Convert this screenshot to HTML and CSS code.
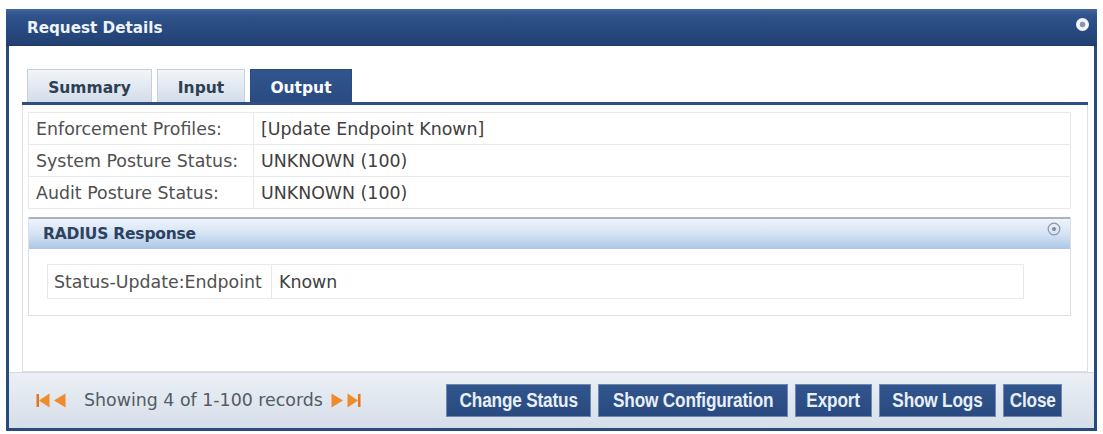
FILE: index.html
```html
<!DOCTYPE html>
<html>
<head>
<meta charset="utf-8">
<link rel="stylesheet" href="styles.css">
</head>
<body>
<div class="dialog">
  <div class="titlebar">
    <span class="title">Request Details</span>
    <span class="close-x"></span>
  </div>
  <div class="body">
    <div class="tabs">
      <div class="tab tab-summary">Summary</div>
      <div class="tab tab-input">Input</div>
      <div class="tab tab-output active">Output</div>
    </div>
    <div class="panel">
      <table class="grid">
        <tr><td class="lbl">Enforcement Profiles:</td><td class="val">[Update Endpoint Known]</td></tr>
        <tr><td class="lbl">System Posture Status:</td><td class="val">UNKNOWN (100)</td></tr>
        <tr><td class="lbl">Audit Posture Status:</td><td class="val">UNKNOWN (100)</td></tr>
      </table>
      <div class="section">
        <div class="section-head">
          <span>RADIUS Response</span>
          <svg class="toggle" width="14" height="14" viewBox="0 0 14 14"><circle cx="7" cy="7" r="5.8" fill="none" stroke="#8a96a6" stroke-width="1.2"/><circle cx="7" cy="7" r="2" fill="#7f8b9b"/></svg>
        </div>
        <div class="section-body">
          <table class="grid inner">
            <tr><td class="lbl2">Status-Update:Endpoint</td><td class="val">Known</td></tr>
          </table>
        </div>
      </div>
    </div>
  </div>
  <div class="footer">
    <div class="pager">
      <svg width="14" height="15" viewBox="0 0 14 15"><rect x="0.5" y="1" width="2.5" height="13" fill="#e8741c"/><polygon points="13.5,0.5 13.5,14.5 3,7.5" fill="#f08a2a"/></svg>
      <svg width="13" height="15" viewBox="0 0 13 15"><polygon points="12.5,0.5 12.5,14.5 1,7.5" fill="#f08a2a"/></svg>
      <span class="pager-text">Showing 4 of 1-100 records</span>
      <svg width="13" height="15" viewBox="0 0 13 15"><polygon points="0.5,0.5 0.5,14.5 12,7.5" fill="#f08a2a"/></svg>
      <svg width="14" height="15" viewBox="0 0 14 15"><polygon points="0.5,0.5 0.5,14.5 11,7.5" fill="#f08a2a"/><rect x="11" y="1" width="2.5" height="13" fill="#e8741c"/></svg>
    </div>
    <div class="buttons">
      <button class="btn btn-change"><span class="btn-label">Change Status</span></button>
      <button class="btn btn-config"><span class="btn-label">Show Configuration</span></button>
      <button class="btn btn-export"><span class="btn-label">Export</span></button>
      <button class="btn btn-logs"><span class="btn-label">Show Logs</span></button>
      <button class="btn btn-close"><span class="btn-label">Close</span></button>
    </div>
  </div>
</div>
</body>
</html>
```
FILE: styles.css
```css
html, body {
  margin: 0;
  padding: 0;
  background: #ffffff;
}
body {
  padding: 9px 6px 2px 6px;
  font-family: "DejaVu Sans", Verdana, sans-serif;
}
.dialog {
  width: 1085px;
  border: 3px solid #284a7c;
  border-top: 0;
  background: #ffffff;
}
.titlebar {
  height: 37px;
  margin: 0 -3px;
  padding: 0 8px 0 21px;
  display: flex;
  align-items: center;
  justify-content: space-between;
  background: linear-gradient(#45689d 0%, #2f538a 18%, #27497f 60%, #224072 100%);
  border-bottom: 1px solid #1d3864;
  box-sizing: border-box;
}
.title {
  color: #eef3fa;
  font-weight: bold;
  font-size: 15.2px;
  padding-top: 2px;
}
.close-x {
  width: 13px;
  height: 13px;
  border-radius: 50%;
  background: radial-gradient(circle, #8d96a3 0 2.5px, #f4f6f9 3.2px);
  margin-top: -6px;
}
.body {
  padding: 23px 6px 0 13px;
  height: 326px;
  box-sizing: border-box;
  background: #ffffff;
}
.tabs {
  display: flex;
  gap: 5px;
  padding-left: 5px;
  height: 33px;
  border-bottom: 3px solid #2d4f85;
}
.tab {
  box-sizing: border-box;
  height: 33px;
  display: flex;
  align-items: center;
  justify-content: center;
  font-weight: bold;
  font-size: 15.5px;
  color: #2f3e53;
  background: linear-gradient(#f1f5f9, #d3dde9);
  border: 1px solid #c5d0de;
  border-bottom: 0;
  padding-top: 3px;
}
.tab-summary { width: 125px; }
.tab-input { width: 88px; }
.tab-output { width: 102px; }
.tab.active {
  background: linear-gradient(#31558d, #294b82);
  border-color: #2a4c83;
  color: #ffffff;
}
.panel {
  height: 267px;
  box-sizing: border-box;
  border: 1px solid #dcdfe4;
  border-top: 0;
  padding: 7px 16px 0 5px;
}
.grid {
  width: 100%;
  border-collapse: collapse;
  font-size: 17.4px;
  color: #505050;
}
.grid td {
  border: 1px solid #e6e9ee;
  height: 30px;
  padding: 1px 7px 0 7px;
  white-space: nowrap;
}
.grid td.lbl {
  width: 210px;
}
.grid td.val {
  color: #404040;
}
.section {
  margin-top: 8px;
  border: 1px solid #dcdfe4;
  border-top: 0;
}
.section-head {
  height: 32px;
  box-sizing: border-box;
  display: flex;
  align-items: center;
  justify-content: space-between;
  padding: 0 9px 0 14px;
  background: linear-gradient(#eef4fb 0%, #d4e3f4 50%, #acc6e5 100%);
  border-top: 2px solid #aab2bd;
  font-weight: bold;
  font-size: 15.5px;
  color: #2e4260;
  letter-spacing: -0.2px;
}
.toggle {
  margin-top: -10px;
}
.section-body {
  padding: 15px 46px 16px 18px;
}
.grid.inner td {
  height: 32px;
}
.grid td.lbl2 {
  width: 210px;
  padding-left: 6px;
}
.footer {
  height: 56px;
  box-sizing: border-box;
  display: flex;
  align-items: center;
  justify-content: space-between;
  padding: 0 32px 1px 27px;
  background: linear-gradient(#ebf0f5, #d6dee9);
  border-top: 1px solid #d2d9e2;
}
.pager {
  display: flex;
  align-items: center;
  gap: 3px;
}
.pager-text {
  font-size: 17.4px;
  color: #555b63;
  margin: 0 5px 0 15px;
}
.buttons {
  display: flex;
  gap: 7px;
}
.btn {
  height: 33px;
  box-sizing: border-box;
  border: 1px solid #6f88ad;
  background: linear-gradient(#31558d, #284a80);
  color: #e9eff7;
  font-family: "Liberation Sans", Arial, sans-serif;
  font-weight: bold;
  font-size: 20px;
  padding: 0;
  cursor: pointer;
  display: flex;
  align-items: center;
  justify-content: center;
  white-space: nowrap;
}
.btn-label {
  display: inline-block;
  transform: scaleX(0.86);
  letter-spacing: -0.2px;
}
.btn-change { width: 145px; }
.btn-config { width: 190px; }
.btn-export { width: 77px; }
.btn-logs { width: 117px; }
.btn-close { width: 59px; }
```
